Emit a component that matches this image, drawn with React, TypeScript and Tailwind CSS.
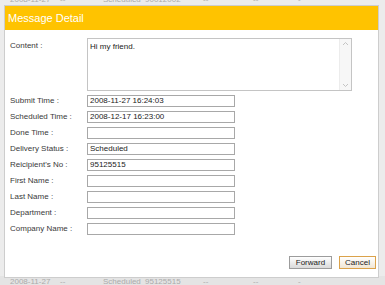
import React from 'react';

const font = { fontFamily: '"Liberation Sans", Arial, sans-serif' };

const rows: { label: string; value: string }[] = [
  { label: 'Submit Time :', value: '2008-11-27 16:24:03' },
  { label: 'Scheduled Time :', value: '2008-12-17 16:23:00' },
  { label: 'Done Time :', value: '' },
  { label: 'Delivery Status :', value: 'Scheduled' },
  { label: "Reicipient's No :", value: '95125515' },
  { label: 'First Name :', value: '' },
  { label: 'Last Name :', value: '' },
  { label: 'Department :', value: '' },
  { label: 'Company Name :', value: '' },
];

// faded table row peeking out behind the dialog
const BgRow: React.FC<{ no: string; className?: string }> = ({ no, className }) => (
  <div className={`flex h-[12px] items-center text-[8px] text-[#ababab] ${className ?? ''}`}>
    <span className="w-[10px]" />
    <span className="w-[50px]">2008-11-27</span>
    <span className="w-[43px]">--</span>
    <span className="w-[42px]">Scheduled</span>
    <span className="w-[58px]">{no}</span>
    <span className="w-[50px]">--</span>
    <span className="w-[45px]">--</span>
    <span>-</span>
  </div>
);

const Field: React.FC<{ label: string; value: string }> = ({ label, value }) => (
  <div className="flex h-[12px] items-center">
    <span className="w-[77px] text-[8px] text-[#3a3a3a]">{label}</span>
    <div className="w-[148px] h-[12px] border border-[#a8a8a8] bg-white flex items-center px-[2px] text-[8px] text-[#222]">
      {value}
    </div>
  </div>
);

export default function App() {
  return (
    <div className="relative w-[385px] h-[285px] overflow-hidden bg-[#ececec] flex flex-col justify-between" style={font}>
      <BgRow no="90012002" className="-mt-[6px]" />
      <BgRow no="95125515" className="-mb-[3px] bg-[#e4e4e4]" />

      <div className="absolute left-[4px] top-[5px] w-[375px] h-[273px] bg-white border border-[#cdcdcd] flex flex-col">
        <div className="h-[24px] bg-[#ffc300] flex items-center pl-[3px] text-[11px] text-white">
          Message Detail
        </div>

        <div className="flex flex-col pl-[5px] pt-[8px]">
          <div className="flex">
            <span className="w-[77px] pt-[2px] text-[8px] text-[#3a3a3a]">Content :</span>
            <div className="w-[265px] h-[53px] border border-[#c4c4c4] bg-white flex">
              <div className="flex-1 px-[2px] pt-[2px] text-[8px] text-[#222]">Hi my friend.</div>
              <div className="w-[12px] flex flex-col items-center justify-between py-[2px] bg-[#f7f7f7] border-l border-[#ececec]">
                <svg width="7" height="5" viewBox="0 0 7 5">
                  <path d="M1 4 L3.5 1.5 L6 4" fill="none" stroke="#c4c4c4" strokeWidth="1" />
                </svg>
                <svg width="7" height="5" viewBox="0 0 7 5">
                  <path d="M1 1 L3.5 3.5 L6 1" fill="none" stroke="#c4c4c4" strokeWidth="1" />
                </svg>
              </div>
            </div>
          </div>

          <div className="flex flex-col gap-[4px] mt-[4px]">
            {rows.map((r) => (
              <Field key={r.label} label={r.label} value={r.value} />
            ))}
          </div>
        </div>

        <div className="flex-1" />

        <div className="flex justify-end gap-[7px] pr-[2px] pb-[8px]">
          <button className="h-[13px] px-[6px] border border-[#9c9c9c] bg-gradient-to-b from-white to-[#dadada] text-[8px] text-[#222] leading-none">
            Forward
          </button>
          <button className="h-[13px] px-[5px] border border-[#dba24a] bg-gradient-to-b from-white to-[#f1e6d4] text-[8px] text-[#222] leading-none">
            Cancel
          </button>
        </div>
      </div>
    </div>
  );
}
